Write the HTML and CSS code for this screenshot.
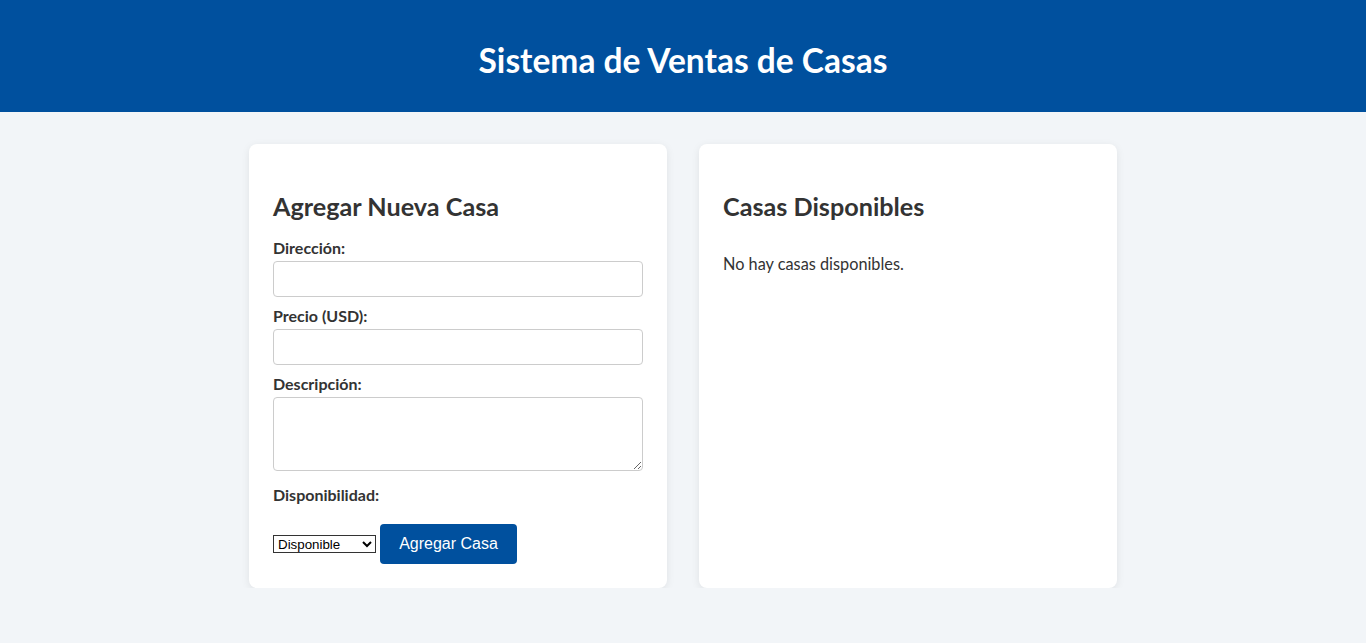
FILE: index.html
```html
<!DOCTYPE html>
<html lang="es">
<head>
<meta charset="utf-8">
<title>Sistema de Ventas de Casas</title>
<link rel="stylesheet" href="styles.css">
</head>
<body>
<header class="topbar">
  <h1 class="title">Sistema de Ventas de Casas</h1>
</header>
<main class="layout">
  <section class="card">
    <h2 class="card-title">Agregar Nueva Casa</h2>
    <form class="form">
      <label class="field-label" for="dir">Dirección:</label>
      <input class="field-input" id="dir" type="text">
      <label class="field-label" for="precio">Precio (USD):</label>
      <input class="field-input" id="precio" type="number">
      <label class="field-label" for="desc">Descripción:</label>
      <textarea class="field-area" id="desc"></textarea>
      <label class="field-label" for="disp">Disponibilidad:</label>
      <div class="actions">
        <select class="field-select" id="disp">
          <option>Disponible</option>
          <option>Vendida</option>
        </select>
        <button class="btn" type="button">Agregar Casa</button>
      </div>
    </form>
  </section>
  <section class="card">
    <h2 class="card-title">Casas Disponibles</h2>
    <p class="empty">No hay casas disponibles.</p>
  </section>
</main>
</body>
</html>
```
FILE: styles.css
```css
* { box-sizing: border-box; }
body {
  margin: 0;
  background: #f2f5f8;
  color: #333;
  font-family: "Lato", "Noto Sans", sans-serif;
  font-size: 16px;
}
.topbar {
  background: #00509e;
  color: #fff;
  height: 112px;
  padding-top: 32px;
  text-align: center;
}
.title {
  margin: 0;
  font-size: 33.5px;
  line-height: 56px;
  font-weight: 700;
}
.layout {
  display: flex;
  justify-content: center;
  align-items: stretch;
  gap: 32px;
  padding-top: 32px;
}
.card {
  width: 418px;
  background: #fff;
  border-radius: 8px;
  padding: 24px;
  box-shadow: 0 2px 8px rgba(0,0,0,0.08);
}
.card-title {
  margin: 22px 0 17px;
  font-size: 25.2px;
  line-height: 32px;
  font-weight: 700;
}
.form { display: flex; flex-direction: column; }
.field-label {
  display: block;
  font-weight: 700;
  font-size: 16px;
  line-height: 18px;
  margin-bottom: 4px;
}
.field-input, .field-area {
  width: 100%;
  border: 1px solid #ccc;
  border-radius: 4px;
  font: inherit;
  padding: 8px;
}
.field-input { height: 36px; margin-bottom: 10px; }
.field-area { height: 74px; margin-bottom: 15px; resize: vertical; }
.actions {
  display: flex;
  align-items: center;
  gap: 4px;
  margin-top: 16px;
}
.field-select {
  width: 103px;
  height: 18px;
  font-family: "Liberation Sans", Arial, sans-serif;
  font-size: 13.33px;
  border: 1px solid #333;
  border-radius: 0;
  background: #fff;
  color: #000;
  padding: 0;
}
.btn {
  height: 40px;
  width: 137px;
  background: #00509e;
  color: #fff;
  border: none;
  border-radius: 4px;
  font-family: "Liberation Sans", Arial, sans-serif;
  font-size: 16px;
  cursor: pointer;
}
.empty {
  margin: 32px 0 0;
  font-size: 16.3px;
  line-height: 20px;
}
```
